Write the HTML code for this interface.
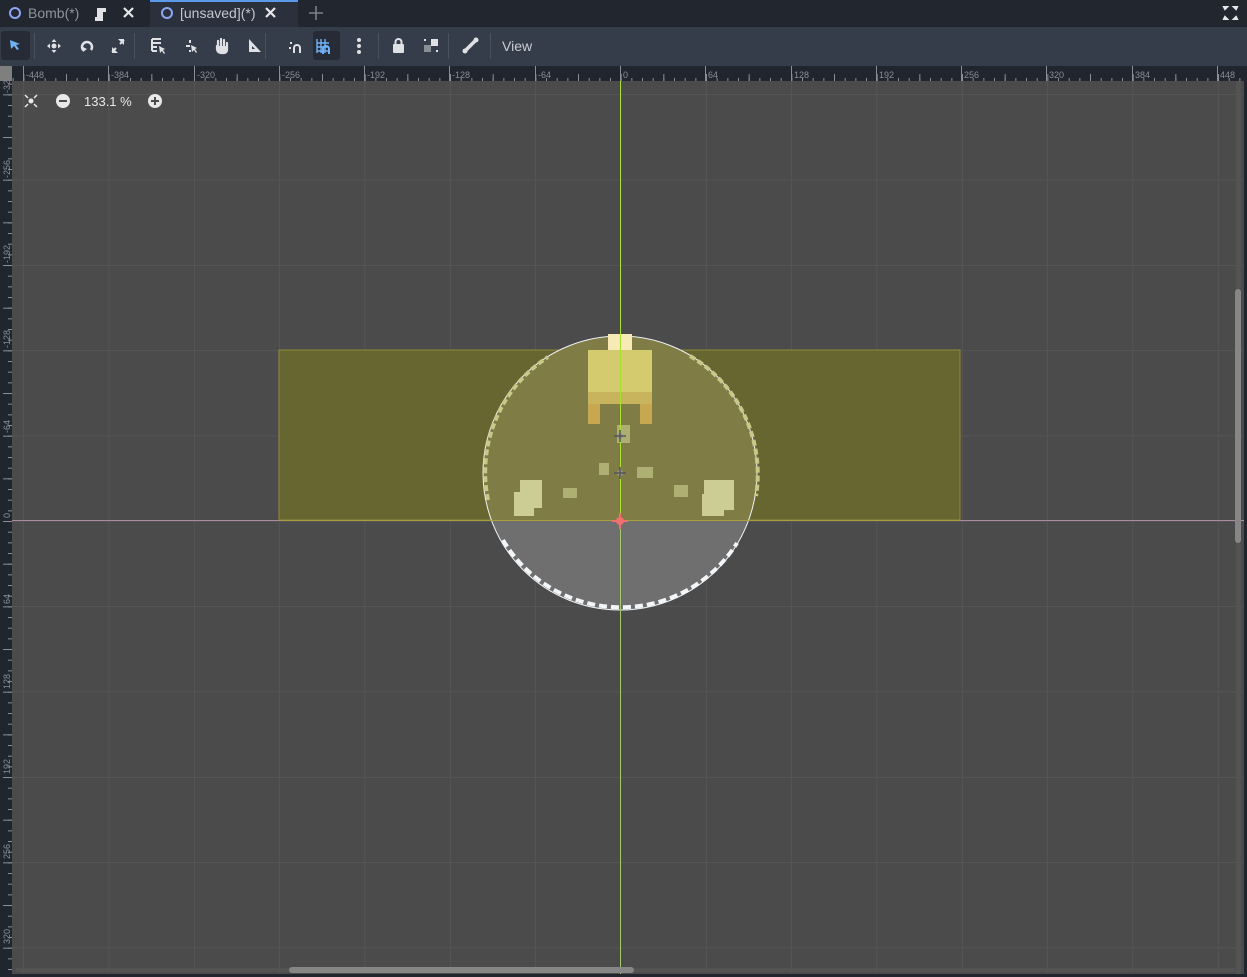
<!DOCTYPE html>
<html><head><meta charset="utf-8"><style>
html,body{margin:0;padding:0;width:1247px;height:977px;overflow:hidden;background:#4b4b4b;font-family:"Liberation Sans",sans-serif}
#tabs{position:absolute;left:0;top:0;width:1247px;height:27px;background:#21262f}
.tab{position:absolute;top:0;height:27px;color:#9aa0aa;font-size:14px;line-height:27px}
#tb{position:absolute;left:0;top:27px;width:1247px;height:39px;background:#363d4a}
.ic{position:absolute;top:0;width:30px;height:39px}
.sep{position:absolute;top:6px;width:1px;height:26px;background:#4a5160}
svg text{font-family:"Liberation Sans",sans-serif}
</style></head><body>
<div id="tabs">
 <div style="position:absolute;left:150px;top:0;width:148px;height:27px;background:#2b313c;border-top:2px solid #5b9ae8;box-sizing:border-box"></div>
 <svg width="1247" height="27" style="position:absolute;left:0;top:0">
  <circle cx="15" cy="13" r="5" fill="none" stroke="#8da5f3" stroke-width="2"/>
  <text x="28" y="18" font-size="14" fill="#8e949c">Bomb(*)</text>
  <path d="M97 8h9v4h-3v9h-8v-4h2z" fill="#dfe1e4"/>
  <path d="M124 8l9 9M133 8l-9 9" stroke="#e6e7ea" stroke-width="2.2"/>
  <circle cx="167" cy="13" r="5" fill="none" stroke="#8da5f3" stroke-width="2"/>
  <text x="180" y="18" font-size="14" fill="#c3c6cc">[unsaved](*)</text>
  <path d="M266 8l9 9M275 8l-9 9" stroke="#e6e7ea" stroke-width="2.2"/>
  <path d="M316 6v14M309 13h14" stroke="#7b808a" stroke-width="1.6"/>
  <path d="M1224 7h3l-2 2zM1237 7h-3l2 2zM1224 19h3l-2-2zM1237 19h-3l2-2z" stroke="#e6e7ea" stroke-width="2" fill="#e6e7ea"/>
 </svg>
</div>
<div id="tb">
 <div style="position:absolute;left:1px;top:4px;width:29px;height:29px;background:#262b35;border-radius:3px"></div>
 <div style="position:absolute;left:313px;top:4px;width:27px;height:29px;background:#262b35;border-radius:3px"></div>
 <div class="sep" style="left:34px"></div><div class="sep" style="left:134px"></div><div class="sep" style="left:265px"></div><div class="sep" style="left:378px"></div><div class="sep" style="left:448px"></div><div class="sep" style="left:490px"></div>
 <svg width="1247" height="39" style="position:absolute;left:0;top:0">
  <path d="M10 13l10 4-4 1 3 4-2 1-3-4-3 3z" fill="#6fb2f5"/>
  <g fill="#dfe1e4"><circle cx="54" cy="19" r="2.5"/><path d="M54 12l-2.5 3h5zM54 26l-2.5-3h5zM47 19l3-2.5v5zM61 19l-3-2.5v5z"/></g>
  <path d="M83 23a5 5 0 1 1 8 0" stroke="#dfe1e4" stroke-width="2.5" fill="none"/><path d="M81 19l2 6 4-3z" fill="#dfe1e4"/>
  <path d="M112 25l4-4M124 13l-4 4" stroke="#dfe1e4" stroke-width="2"/><path d="M112 20v6h6zM124 18v-6h-6z" fill="#dfe1e4"/>
  <path d="M152 12h9M152 16h9M152 20h5M152 24h5M152 12v12" stroke="#dfe1e4" stroke-width="2"/><path d="M159 19l6 3-2 1 2 3-1 1-2-3-2 2z" fill="#dfe1e4"/>
  <path d="M186 19h4M190 13v3M190 23v2" stroke="#dfe1e4" stroke-width="2"/><path d="M191 18l6 3-2 1 2 3-1 1-2-3-2 2z" fill="#dfe1e4"/>
  <path d="M218 20v-6M221 20v-8M224 20v-7M227 21v-5M217 19v3a4 4 0 0 0 4 4h3a3 3 0 0 0 3-3v-4" stroke="#dfe1e4" stroke-width="2.2" fill="#dfe1e4" stroke-linecap="round"/>
  <path d="M249 12v13h12z" fill="#dfe1e4"/><path d="M252 19v3h3z" fill="#363d4a"/>
  <path d="M290 16h2M289 21h2M294 26v-5a3 3 0 0 1 6 0v5" stroke="#dfe1e4" stroke-width="2" fill="none"/>
  <path d="M317 12v14M321 12v14M325 12v14M317 16h12M317 20h12M317 24h12" stroke="#6fb2f5" stroke-width="1.4"/><path d="M323 27v-5a3 3 0 0 1 6 0v5" stroke="#6fb2f5" stroke-width="2" fill="none"/>
  <g fill="#dfe1e4"><circle cx="359" cy="13" r="2"/><circle cx="359" cy="19" r="2"/><circle cx="359" cy="25" r="2"/></g>
  <rect x="393" y="17" width="11" height="9" rx="1" fill="#dfe1e4"/><path d="M395.5 17v-2a3 3 0 0 1 6 0v2" stroke="#dfe1e4" stroke-width="2" fill="none"/>
  <rect x="424" y="18" width="7" height="7" fill="#8a8e96"/><rect x="431" y="12" width="7" height="7" fill="#dfe1e4"/><rect x="424" y="12" width="2" height="2" fill="#dfe1e4"/><rect x="436" y="23" width="2" height="2" fill="#dfe1e4"/>
  <path d="M465 24l11-11" stroke="#dfe1e4" stroke-width="3.5"/><circle cx="465" cy="24" r="2.5" fill="#dfe1e4"/><circle cx="476" cy="13" r="2.5" fill="#dfe1e4"/>
  <text x="502" y="24" font-size="14" fill="#c9ccd2">View</text>
 </svg>
</div>
<svg width="1247" height="911" style="position:absolute;left:0;top:66px" viewBox="0 66 1247 911">
 <defs>
  <pattern id="grid" x="23.33" y="9" width="85.33" height="85.33" patternUnits="userSpaceOnUse">
   <path d="M0 0V85.33M0 0H85.33" stroke="#5d5d5d" stroke-width="1"/>
  </pattern>
  <pattern id="tx" x="23.33" y="66" width="10.667" height="15" patternUnits="userSpaceOnUse"><rect x="0" y="12" width="1" height="3" fill="#8a8e96"/></pattern>
  <pattern id="tx2" x="23.33" y="66" width="42.667" height="15" patternUnits="userSpaceOnUse"><rect x="0" y="8" width="1" height="7" fill="#8a8e96"/></pattern>
  <pattern id="ty" x="0" y="9" width="12" height="10.667" patternUnits="userSpaceOnUse"><rect x="8" y="0" width="4" height="1" fill="#8a8e96"/></pattern>
  <pattern id="ty2" x="0" y="9" width="12" height="42.667" patternUnits="userSpaceOnUse"><rect x="3" y="0" width="9" height="1" fill="#8a8e96"/></pattern>
 </defs>
 <rect x="0" y="66" width="1247" height="911" fill="#4b4b4b"/>
 <rect x="12" y="81" width="1235" height="896" fill="url(#grid)"/>
 <!-- yellow rect -->
 <rect x="279" y="350" width="681" height="170" fill="#676530" stroke="#8e8b3a" stroke-width="1"/>
 <!-- circle -->
 <clipPath id="top"><rect x="0" y="300" width="1247" height="220"/></clipPath>
 <clipPath id="bot"><rect x="0" y="520" width="1247" height="120"/></clipPath>
 <circle cx="620" cy="473" r="137" fill="#6f6f6f" clip-path="url(#bot)"/>
 <circle cx="620" cy="473" r="137" fill="#7f7c45" clip-path="url(#top)"/>
 <path d="M487 355a137 137 0 0 0 0 0" />
 <circle cx="620" cy="473" r="137" fill="none" stroke="#eef3f6" stroke-width="1"/>
 <path d="M503 540a137 137 0 0 0 234 3" fill="none" stroke="#f2f6f8" stroke-width="4" stroke-dasharray="8 4" clip-path="url(#bot)"/>
 <path d="M488 500a137 137 0 0 1 60 -143" fill="none" stroke="#c8c889" stroke-width="4" stroke-dasharray="6 3"/>
 <path d="M690 356a137 137 0 0 1 66 140" fill="none" stroke="#c8c889" stroke-width="4" stroke-dasharray="6 3"/>
 <rect x="608" y="334" width="24" height="16" fill="#f8eab5"/>
 <rect x="588" y="350" width="64" height="42" fill="#d3cb6d"/>
 <rect x="588" y="392" width="64" height="12" fill="#c7b45c"/>
 <rect x="588" y="404" width="12" height="20" fill="#c7a850"/><rect x="640" y="404" width="12" height="20" fill="#c7a850"/>
 <rect x="617" y="425" width="13" height="18" fill="#aeb073"/>
 <path d="M520 480h22v28h-8v8h-20v-24h6z" fill="#cbcd95"/>
 <path d="M704 480h30v30h-10v6h-22v-22h2z" fill="#cbcd95"/>
 <rect x="563" y="488" width="14" height="10" fill="#aeb073"/><rect x="674" y="485" width="14" height="12" fill="#aeb073"/>
 <rect x="599" y="463" width="10" height="12" fill="#aeb073"/><rect x="637" y="467" width="16" height="11" fill="#aeb073"/>
 <!-- axes -->
 <line x1="620.5" y1="81" x2="620.5" y2="977" stroke="#9ec86a" stroke-width="1"/>
 <line x1="620.5" y1="81" x2="620.5" y2="520" stroke="#a8e030" stroke-width="1"/>
 <line x1="12" y1="520.5" x2="1247" y2="520.5" stroke="#b08ba0" stroke-width="1"/>
 <line x1="279" y1="520.5" x2="960" y2="520.5" stroke="#a8a03a" stroke-width="1"/>
 <circle cx="620" cy="521" r="4" fill="#f07070"/><path d="M620 513v16M612 521h16" stroke="#f07070" stroke-width="2"/>
 <circle cx="620" cy="436" r="3" fill="#999"/><path d="M620 430v12M614 436h12" stroke="#555" stroke-width="1.5"/>
 <circle cx="620" cy="473" r="3" fill="#999"/><path d="M620 467v12M614 473h12" stroke="#555" stroke-width="1.5"/>
 <!-- rulers -->
 <rect x="0" y="66" width="1247" height="15" fill="#21252d"/>
 <rect x="0" y="66" width="12" height="911" fill="#21252d"/>
 <rect x="0" y="66" width="12" height="15" fill="#7f7f7f"/>
 <rect x="12" y="66" width="1235" height="15" fill="url(#tx)"/>
 <rect x="12" y="66" width="1235" height="15" fill="url(#tx2)"/>
 <rect x="0" y="81" width="12" height="896" fill="url(#ty)"/>
 <rect x="0" y="81" width="12" height="896" fill="url(#ty2)"/>
 <g fill="#8a8e96" font-size="9">
  <rect x="23" y="66" width="1" height="15"/><rect x="108" y="66" width="1" height="15"/><rect x="194" y="66" width="1" height="15"/><rect x="279" y="66" width="1" height="15"/><rect x="364" y="66" width="1" height="15"/><rect x="449" y="66" width="1" height="15"/><rect x="535" y="66" width="1" height="15"/><rect x="620" y="66" width="1" height="15"/><rect x="705" y="66" width="1" height="15"/><rect x="791" y="66" width="1" height="15"/><rect x="876" y="66" width="1" height="15"/><rect x="961" y="66" width="1" height="15"/><rect x="1046" y="66" width="1" height="15"/><rect x="1132" y="66" width="1" height="15"/><rect x="1217" y="66" width="1" height="15"/>
  <text x="26" y="78">-448</text><text x="111" y="78">-384</text><text x="197" y="78">-320</text><text x="282" y="78">-256</text><text x="367" y="78">-192</text><text x="452" y="78">-128</text><text x="538" y="78">-64</text><text x="623" y="78">0</text><text x="708" y="78">64</text><text x="794" y="78">128</text><text x="879" y="78">192</text><text x="964" y="78">256</text><text x="1049" y="78">320</text><text x="1135" y="78">384</text><text x="1220" y="78">448</text>
  <g transform="translate(10,0) rotate(-90)">
   <text x="-93" y="0">-32</text><text x="-178" y="0">-256</text><text x="-263" y="0">-192</text><text x="-348" y="0">-128</text><text x="-433" y="0">-64</text><text x="-518" y="0">0</text><text x="-604" y="0">64</text><text x="-689" y="0">128</text><text x="-774" y="0">192</text><text x="-859" y="0">256</text><text x="-944" y="0">320</text>
  </g>
 </g>
 <!-- zoom widget -->
 <g fill="#e8e8e8">
  <circle cx="31" cy="101" r="2.5"/><path d="M25 95l3 3M37 95l-3 3M25 107l3-3M37 107l-3-3" stroke="#e8e8e8" stroke-width="1.5"/>
  <circle cx="63" cy="101" r="7"/><circle cx="155" cy="101" r="7"/>
  <text x="84" y="106" font-size="13">133.1 %</text>
 </g>
 <path d="M59 101h8M151 101h8M155 97v8" stroke="#4b4b4b" stroke-width="2"/>
 <!-- scrollbars -->
 <rect x="1236" y="81" width="5" height="893" fill="#535353"/>
 <rect x="1235" y="289" width="6" height="254" rx="3" fill="#868686"/>
 <rect x="16" y="968" width="1219" height="4" fill="#535353"/>
 <rect x="289" y="967" width="345" height="6" rx="3" fill="#868686"/>
 <rect x="1244" y="66" width="3" height="911" fill="#21252d"/>
 <rect x="0" y="974" width="1247" height="3" fill="#21252d"/>
</svg>
</body></html>
